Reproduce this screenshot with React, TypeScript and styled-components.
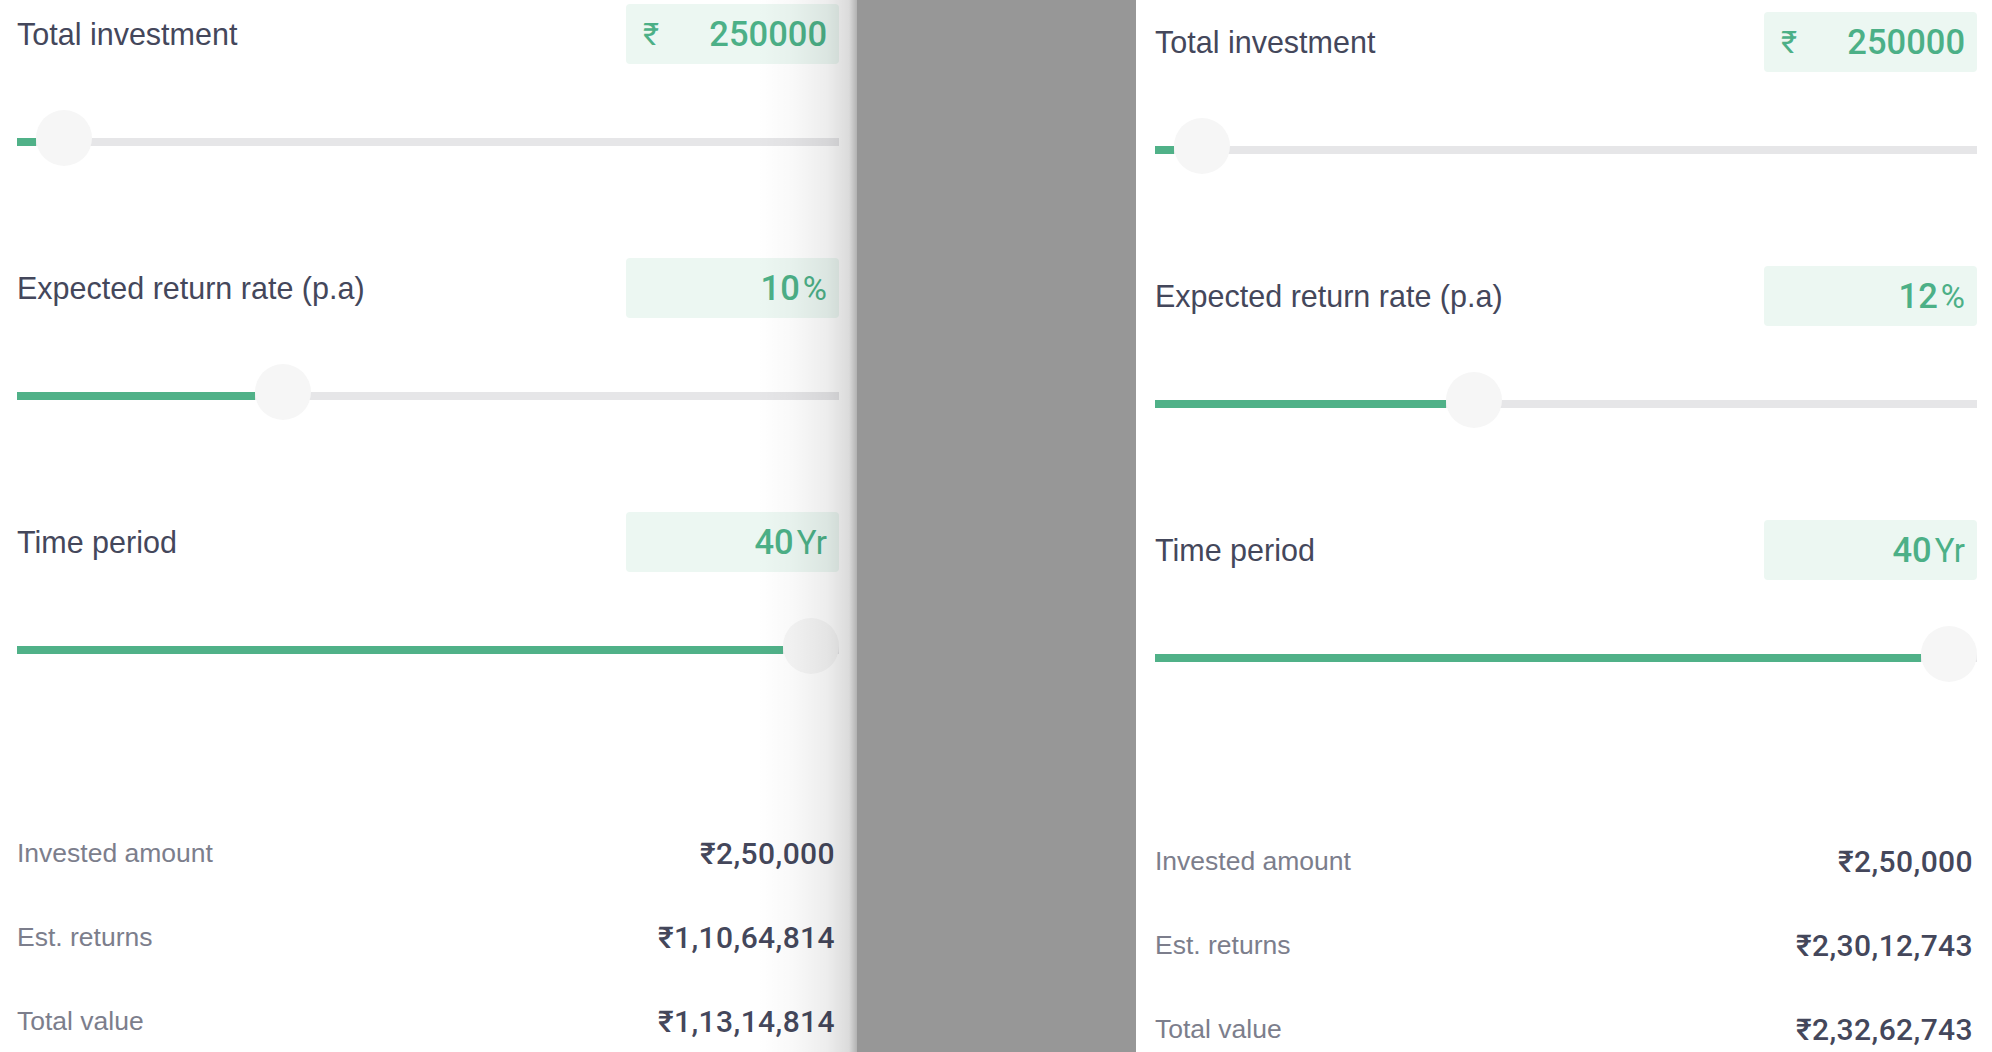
import React from "react";
import styled, { createGlobalStyle } from "styled-components";

const GlobalStyle = createGlobalStyle`
  html, body {
    margin: 0;
    padding: 0;
    background: #979797;
  }
  * { box-sizing: border-box; }
  #root {
    font-family: "Liberation Sans", "DejaVu Sans", Arial, sans-serif;
  }
`;

const TRACK_W = 822;
const THUMB = 56;
const TRAVEL = TRACK_W - THUMB;

const Page = styled.div`
  display: flex;
  width: 1992px;
  height: 1052px;
  overflow: hidden;
  background: #979797;
`;

const Panel = styled.section<{ $side: "left" | "right" }>`
  position: relative;
  flex: none;
  width: ${(p) => (p.$side === "left" ? "857px" : "856px")};
  height: 100%;
  background: #ffffff;
  margin-left: ${(p) => (p.$side === "left" ? "0" : "auto")};
  padding: ${(p) => (p.$side === "left" ? "4px 18px 0 17px" : "12px 15px 0 19px")};
  overflow: hidden;

  ${(p) =>
    p.$side === "left" &&
    `
    &::after {
      content: "";
      position: absolute;
      top: 0;
      right: 0;
      bottom: 0;
      width: 100px;
      pointer-events: none;
      background: linear-gradient(
        to right,
        rgba(0, 0, 0, 0) 0%,
        rgba(0, 0, 0, 0.025) 35%,
        rgba(0, 0, 0, 0.07) 70%,
        rgba(0, 0, 0, 0.14) 92%,
        rgba(0, 0, 0, 0.3) 100%
      );
    }
  `}
`;

const Calc = styled.div`
  display: flex;
  flex-direction: column;
  width: ${TRACK_W}px;
`;

const Groups = styled.div`
  display: flex;
  flex-direction: column;
  gap: 112px;
`;

const Group = styled.div`
  display: flex;
  flex-direction: column;
`;

const Header = styled.div`
  display: flex;
  align-items: center;
  justify-content: space-between;
  height: 60px;
`;

const Label = styled.span`
  font-size: 30.5px;
  color: #44475b;
  font-weight: 400;
`;

const ValueBox = styled.div<{ $hasPrefix: boolean }>`
  display: flex;
  align-items: center;
  justify-content: ${(p) => (p.$hasPrefix ? "space-between" : "flex-end")};
  width: 213px;
  height: 60px;
  padding: 0 12px 0 17px;
  background: #ecf7f2;
  border-radius: 4px;
  color: #4cb087;
`;

const Prefix = styled.span`
  font-family: Roboto, "DejaVu Sans", sans-serif;
  font-size: 31px;
  font-weight: 400;
  color: #4cb087;
`;

const Amount = styled.span`
  display: flex;
  align-items: baseline;
  gap: 3px;
`;

const Num = styled.span`
  font-family: Roboto, "Liberation Sans", sans-serif;
  font-size: 34.5px;
  font-weight: 500;
  color: #4cb087;
`;

const Suffix = styled.span`
  font-family: Roboto, "Liberation Sans", sans-serif;
  font-size: 33px;
  font-weight: 400;
  color: #4cb087;
`;

const Track = styled.div`
  position: relative;
  margin-top: 74px;
  width: 100%;
  height: 8px;
  background: #e6e6e8;
`;

const Fill = styled.div`
  height: 100%;
  background: #50b188;
`;

const Thumb = styled.div`
  position: absolute;
  top: -28px;
  width: ${THUMB}px;
  height: ${THUMB}px;
  border-radius: 50%;
  background: #f6f6f6;
`;

const Stats = styled.div`
  display: flex;
  flex-direction: column;
  margin-top: 157px;
`;

const StatRow = styled.div`
  display: flex;
  align-items: center;
  justify-content: space-between;
  height: 84px;
  padding-right: 4px;
`;

const StatLabel = styled.span`
  font-size: 26.5px;
  color: #7c7e8c;
  font-weight: 400;
`;

const StatValue = styled.span`
  font-family: Roboto, "Liberation Sans", "DejaVu Sans", sans-serif;
  font-size: 30px;
  font-weight: 500;
  color: #44475b;
  letter-spacing: 0.4px;
`;

function formatINR(n: number): string {
  const s = Math.round(n).toString();
  if (s.length <= 3) return s;
  const last3 = s.slice(-3);
  let rest = s.slice(0, -3);
  const parts: string[] = [];
  while (rest.length > 2) {
    parts.unshift(rest.slice(-2));
    rest = rest.slice(0, -2);
  }
  if (rest) parts.unshift(rest);
  return parts.join(",") + "," + last3;
}

type SliderProps = {
  label: string;
  value: number;
  min: number;
  max: number;
  prefix?: string;
  suffix?: string;
};

function SliderField({ label, value, min, max, prefix, suffix }: SliderProps) {
  const ratio = (value - min) / (max - min);
  const offset = ratio * TRAVEL;
  return (
    <Group>
      <Header>
        <Label>{label}</Label>
        <ValueBox $hasPrefix={!!prefix}>
          {prefix && <Prefix>{prefix}</Prefix>}
          <Amount>
            <Num>{value}</Num>
            {suffix && <Suffix>{suffix}</Suffix>}
          </Amount>
        </ValueBox>
      </Header>
      <Track>
        <Fill style={{ width: `${offset}px` }} />
        <Thumb style={{ left: `${offset}px` }} />
      </Track>
    </Group>
  );
}

function Calculator({ invest, rate, years }: { invest: number; rate: number; years: number }) {
  const total = Math.round(invest * Math.pow(1 + rate / 100, years));
  const returns = total - invest;
  return (
    <Calc>
      <Groups>
        <SliderField label="Total investment" value={invest} min={5000} max={10000000} prefix="₹" />
        <SliderField label="Expected return rate (p.a)" value={rate} min={1} max={30} suffix="%" />
        <SliderField label="Time period" value={years} min={1} max={40} suffix="Yr" />
      </Groups>
      <Stats>
        <StatRow>
          <StatLabel>Invested amount</StatLabel>
          <StatValue>₹{formatINR(invest)}</StatValue>
        </StatRow>
        <StatRow>
          <StatLabel>Est. returns</StatLabel>
          <StatValue>₹{formatINR(returns)}</StatValue>
        </StatRow>
        <StatRow>
          <StatLabel>Total value</StatLabel>
          <StatValue>₹{formatINR(total)}</StatValue>
        </StatRow>
      </Stats>
    </Calc>
  );
}

export default function App() {
  return (
    <>
      <GlobalStyle />
      <Page>
        <Panel $side="left">
          <Calculator invest={250000} rate={10} years={40} />
        </Panel>
        <Panel $side="right">
          <Calculator invest={250000} rate={12} years={40} />
        </Panel>
      </Page>
    </>
  );
}
